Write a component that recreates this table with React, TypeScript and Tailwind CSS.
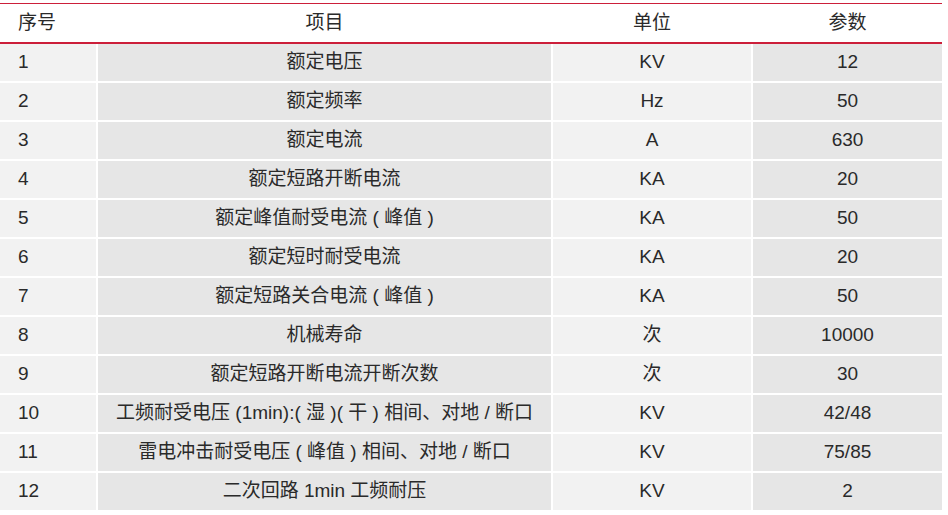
const rows: [string, string, string, string][] = [
  ['1', '额定电压', 'KV', '12'],
  ['2', '额定频率', 'Hz', '50'],
  ['3', '额定电流', 'A', '630'],
  ['4', '额定短路开断电流', 'KA', '20'],
  ['5', '额定峰值耐受电流 ( 峰值 )', 'KA', '50'],
  ['6', '额定短时耐受电流', 'KA', '20'],
  ['7', '额定短路关合电流 ( 峰值 )', 'KA', '50'],
  ['8', '机械寿命', '次', '10000'],
  ['9', '额定短路开断电流开断次数', '次', '30'],
  ['10', '工频耐受电压 (1min):( 湿 )( 干 ) 相间、对地 / 断口', 'KV', '42/48'],
  ['11', '雷电冲击耐受电压 ( 峰值 ) 相间、对地 / 断口', 'KV', '75/85'],
  ['12', '二次回路 1min 工频耐压', 'KV', '2'],
];

const cols = 'grid grid-cols-[96px_453px_198px_189px] gap-x-[2px]';

export default function App() {
  return (
    <div
      className="w-[948px] h-[515px] bg-white pt-[3px] text-[#2a2a2a] text-[19px]"
      style={{ fontFamily: '"Liberation Sans", "Noto Sans CJK SC", sans-serif' }}
    >
      <div className="w-[942px]">
        {/* 表头 */}
        <div className={`${cols} h-[41px] border-t-[1.5px] border-b-2 border-[#cc1f3a] items-center`}>
          <div className="pl-[18px]">序号</div>
          <div className="text-center">项目</div>
          <div className="text-center">单位</div>
          <div className="text-center">参数</div>
        </div>
        {rows.map((r) => (
          <div key={r[0]} className={`${cols} border-b-2 border-white`}>
            <div className="h-[37px] flex items-center pl-[18px] bg-[#f2f2f2]">{r[0]}</div>
            <div className="h-[37px] flex items-center justify-center bg-[#e6e6e6]">{r[1]}</div>
            <div className="h-[37px] flex items-center justify-center bg-[#f2f2f2]">{r[2]}</div>
            <div className="h-[37px] flex items-center justify-center bg-[#e6e6e6]">{r[3]}</div>
          </div>
        ))}
      </div>
    </div>
  );
}
